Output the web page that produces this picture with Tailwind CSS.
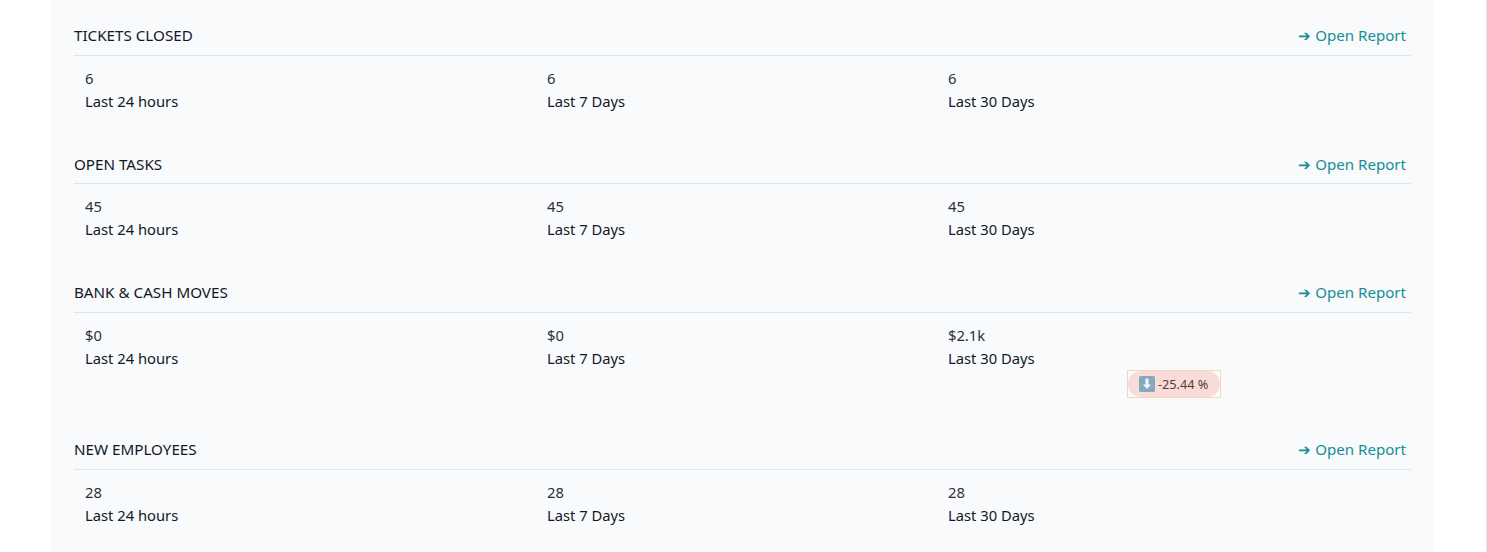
<!DOCTYPE html>
<html lang="en">
  <head>
    <meta charset="UTF-8" />
    <meta name="viewport" content="width=device-width,initial-scale=1.0" />
    <title>Reports</title>
    <script src="https://cdn.jsdelivr.net/npm/@tailwindcss/browser@4"></script>
  </head>
  <body class="h-[552px] overflow-hidden bg-white font-['Noto_Sans',sans-serif] text-[14.75px] text-[#27323c]">
    <div class="h-[552px] border-r border-[#e3e6ea]">
      <div class="ml-[51px] h-[552px] w-[1382px] bg-[#f9fafc] pl-[23px] pr-[22px]">

        <!-- Tickets closed -->
        <section class="h-[129px] pt-[24px]">
          <div class="flex h-[32px] items-start justify-between border-b border-[#e1e4e8] pr-[5px]">
            <h2 class="text-[15.2px] leading-[22px] text-[#111827]">TICKETS CLOSED</h2>
            <a class="text-[15.1px] leading-[22px] text-[#148f96]">➔ Open Report</a>
          </div>
          <div class="grid grid-cols-[462px_401px_1fr] pl-[11px] pt-[11px] leading-[23px]">
            <div><p>6</p><p class="text-[#111827]">Last 24 hours</p></div>
            <div><p>6</p><p class="text-[#111827]">Last 7 Days</p></div>
            <div><p>6</p><p class="text-[#111827]">Last 30 Days</p></div>
          </div>
        </section>

        <!-- Open tasks -->
        <section class="h-[128px] pt-[24px]">
          <div class="flex h-[31px] items-start justify-between border-b border-[#e1e4e8] pr-[5px]">
            <h2 class="text-[15.2px] leading-[22px] text-[#111827]">OPEN TASKS</h2>
            <a class="text-[15.1px] leading-[22px] text-[#148f96]">➔ Open Report</a>
          </div>
          <div class="grid grid-cols-[462px_401px_1fr] pl-[11px] pt-[11px] leading-[23px]">
            <div><p>45</p><p class="text-[#111827]">Last 24 hours</p></div>
            <div><p>45</p><p class="text-[#111827]">Last 7 Days</p></div>
            <div><p>45</p><p class="text-[#111827]">Last 30 Days</p></div>
          </div>
        </section>

        <!-- Bank and cash moves -->
        <section class="h-[157px] pt-[24px]">
          <div class="flex h-[32px] items-start justify-between border-b border-[#e1e4e8] pr-[5px]">
            <h2 class="text-[15.2px] leading-[22px] text-[#111827]">BANK &amp; CASH MOVES</h2>
            <a class="text-[15.1px] leading-[22px] text-[#148f96]">➔ Open Report</a>
          </div>
          <div class="grid grid-cols-[462px_401px_1fr] pl-[11px] pt-[11px] leading-[23px]">
            <div><p>$0</p><p class="text-[#111827]">Last 24 hours</p></div>
            <div><p>$0</p><p class="text-[#111827]">Last 7 Days</p></div>
            <div class="relative">
              <p>$2.1k</p>
              <p class="text-[#111827]">Last 30 Days</p>
              <!-- square outline around the rounded pill -->
              <div class="absolute left-[179px] top-[46px] h-[28px] w-[94px] border border-[#f3d9bd]">
                <div class="flex h-full items-center gap-[3px] rounded-[13px] bg-[#f8dcd9] pl-[11px] text-[12.7px] text-[#5f3a2e]">
                  <svg width="16" height="16" viewBox="0 0 16 16"><rect width="16" height="16" rx="1.5" fill="#86a9c0"/><path d="M6.500 2.500h3v6h2.500L8 13 4 8.500h2.500z" fill="#f2f6f8"/></svg>
                  <span>-25.44 %</span>
                </div>
              </div>
            </div>
          </div>
        </section>

        <!-- New employees -->
        <section class="pt-[24px]">
          <div class="flex h-[32px] items-start justify-between border-b border-[#e1e4e8] pr-[5px]">
            <h2 class="text-[15.2px] leading-[22px] text-[#111827]">NEW EMPLOYEES</h2>
            <a class="text-[15.1px] leading-[22px] text-[#148f96]">➔ Open Report</a>
          </div>
          <div class="grid grid-cols-[462px_401px_1fr] pl-[11px] pt-[11px] leading-[23px]">
            <div><p>28</p><p class="text-[#111827]">Last 24 hours</p></div>
            <div><p>28</p><p class="text-[#111827]">Last 7 Days</p></div>
            <div><p>28</p><p class="text-[#111827]">Last 30 Days</p></div>
          </div>
        </section>

      </div>
    </div>
  </body>
</html>
